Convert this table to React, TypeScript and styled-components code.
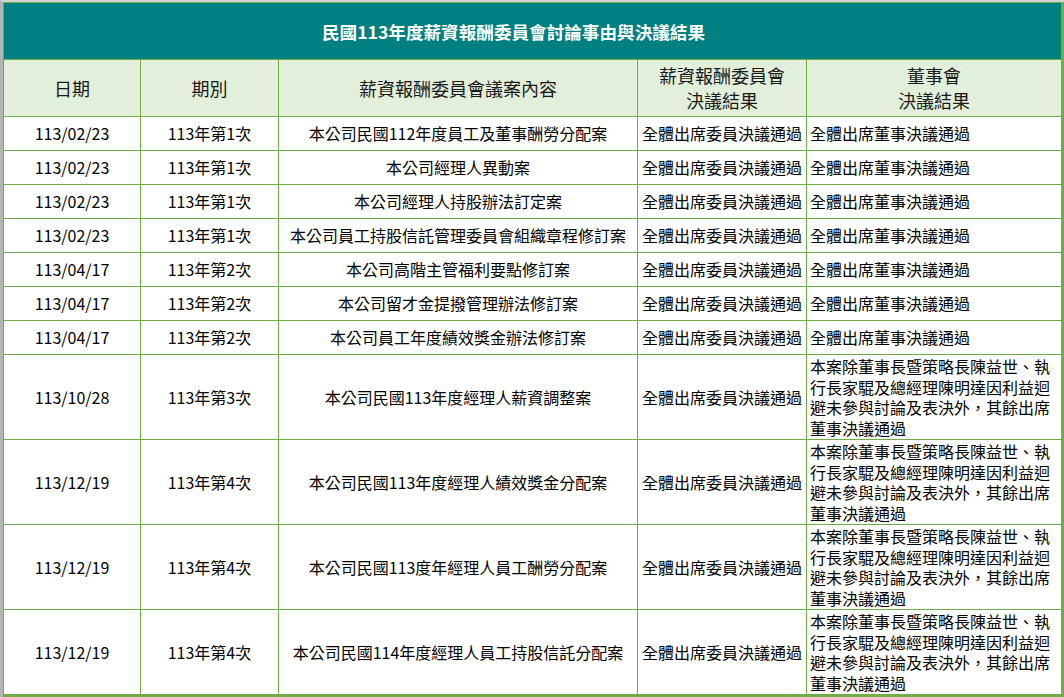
import React from 'react';
import styled, { createGlobalStyle } from 'styled-components';

interface Resolution {
  date: string;
  session: string;
  topic: string;
  committee: string;
  board: string;
  tall?: boolean;
}

const RECUSAL = '本案除董事長暨策略長陳益世、執行長家騉及總經理陳明達因利益迴避未參與討論及表決外，其餘出席董事決議通過';
const PASSED_COMMITTEE = '全體出席委員決議通過';
const PASSED_BOARD = '全體出席董事決議通過';

const rows: Resolution[] = [
  { date: '113/02/23', session: '113年第1次', topic: '本公司民國112年度員工及董事酬勞分配案', committee: PASSED_COMMITTEE, board: PASSED_BOARD },
  { date: '113/02/23', session: '113年第1次', topic: '本公司經理人異動案', committee: PASSED_COMMITTEE, board: PASSED_BOARD },
  { date: '113/02/23', session: '113年第1次', topic: '本公司經理人持股辦法訂定案', committee: PASSED_COMMITTEE, board: PASSED_BOARD },
  { date: '113/02/23', session: '113年第1次', topic: '本公司員工持股信託管理委員會組織章程修訂案', committee: PASSED_COMMITTEE, board: PASSED_BOARD },
  { date: '113/04/17', session: '113年第2次', topic: '本公司高階主管福利要點修訂案', committee: PASSED_COMMITTEE, board: PASSED_BOARD },
  { date: '113/04/17', session: '113年第2次', topic: '本公司留才金提撥管理辦法修訂案', committee: PASSED_COMMITTEE, board: PASSED_BOARD },
  { date: '113/04/17', session: '113年第2次', topic: '本公司員工年度績效獎金辦法修訂案', committee: PASSED_COMMITTEE, board: PASSED_BOARD },
  { date: '113/10/28', session: '113年第3次', topic: '本公司民國113年度經理人薪資調整案', committee: PASSED_COMMITTEE, board: RECUSAL, tall: true },
  { date: '113/12/19', session: '113年第4次', topic: '本公司民國113年度經理人績效獎金分配案', committee: PASSED_COMMITTEE, board: RECUSAL, tall: true },
  { date: '113/12/19', session: '113年第4次', topic: '本公司民國113度年經理人員工酬勞分配案', committee: PASSED_COMMITTEE, board: RECUSAL, tall: true },
  { date: '113/12/19', session: '113年第4次', topic: '本公司民國114年度經理人員工持股信託分配案', committee: PASSED_COMMITTEE, board: RECUSAL, tall: true },
];

const App: React.FC = () => {
  return (
    <>
      <GlobalStyle />
      <Sheet>
        <Table>
          <Title>民國113年度薪資報酬委員會討論事由與決議結果</Title>

          <HeadCell>日期</HeadCell>
          <HeadCell>期別</HeadCell>
          <HeadCell>薪資報酬委員會議案內容</HeadCell>
          <HeadCell>薪資報酬委員會<br />決議結果</HeadCell>
          <HeadCell>董事會<br />決議結果</HeadCell>

          {rows.map((row, i) => (
            <React.Fragment key={i}>
              <Cell $tall={row.tall}>{row.date}</Cell>
              <Cell $tall={row.tall}>{row.session}</Cell>
              <Cell $tall={row.tall}>{row.topic}</Cell>
              <Cell $tall={row.tall}>{row.committee}</Cell>
              <Cell $tall={row.tall} $left>{row.board}</Cell>
            </React.Fragment>
          ))}
        </Table>
      </Sheet>
    </>
  );
};

// Styled Components
const GlobalStyle = createGlobalStyle`
  html, body {
    margin: 0;
    padding: 0;
    background: #ffffff;
    overflow: hidden;
  }

  body {
    font-family: "Noto Sans CJK TC", "Noto Sans", sans-serif;
    color: #000000;
  }
`;

const Sheet = styled.div`
  width: 1064px;
  box-sizing: border-box;
  border-left: 3px solid #b4b4b4;
  border-top: 2px solid #d4d4d4;
`;

const Table = styled.div`
  display: grid;
  grid-template-columns: 136px 137px 358px 168px 254px;
  gap: 1px;
  background: #70ad47;
  border-top: 1px solid #70ad47;
  border-left: 1px solid #70ad47;
  border-right: 3px solid #70ad47;
  border-bottom: 3px solid #70ad47;
`;

const Title = styled.div`
  grid-column: 1 / -1;
  height: 56px;
  display: flex;
  align-items: center;
  justify-content: center;
  padding-right: 38px;
  background: #008080;
  color: #ffffff;
  font-size: 17.6px;
  font-weight: 700;
`;

const HeadCell = styled.div`
  height: 56px;
  display: flex;
  align-items: center;
  justify-content: center;
  text-align: center;
  background: #e2efda;
  font-size: 18px;
  line-height: 25px;
  color: #1a1a1a;
`;

const Cell = styled.div<{ $tall?: boolean; $left?: boolean }>`
  height: ${p => (p.$tall ? 84 : 33)}px;
  box-sizing: border-box;
  display: flex;
  align-items: center;
  justify-content: ${p => (p.$left ? 'flex-start' : 'center')};
  padding: ${p => (p.$left ? '0 2px 0 3px' : '0 2px')};
  background: #ffffff;
  font-size: 16px;
  line-height: 20.5px;
  text-align: ${p => (p.$left ? 'left' : 'center')};
  white-space: ${p => (p.$tall && p.$left ? 'normal' : 'nowrap')};
  overflow: hidden;
`;

export default App;
